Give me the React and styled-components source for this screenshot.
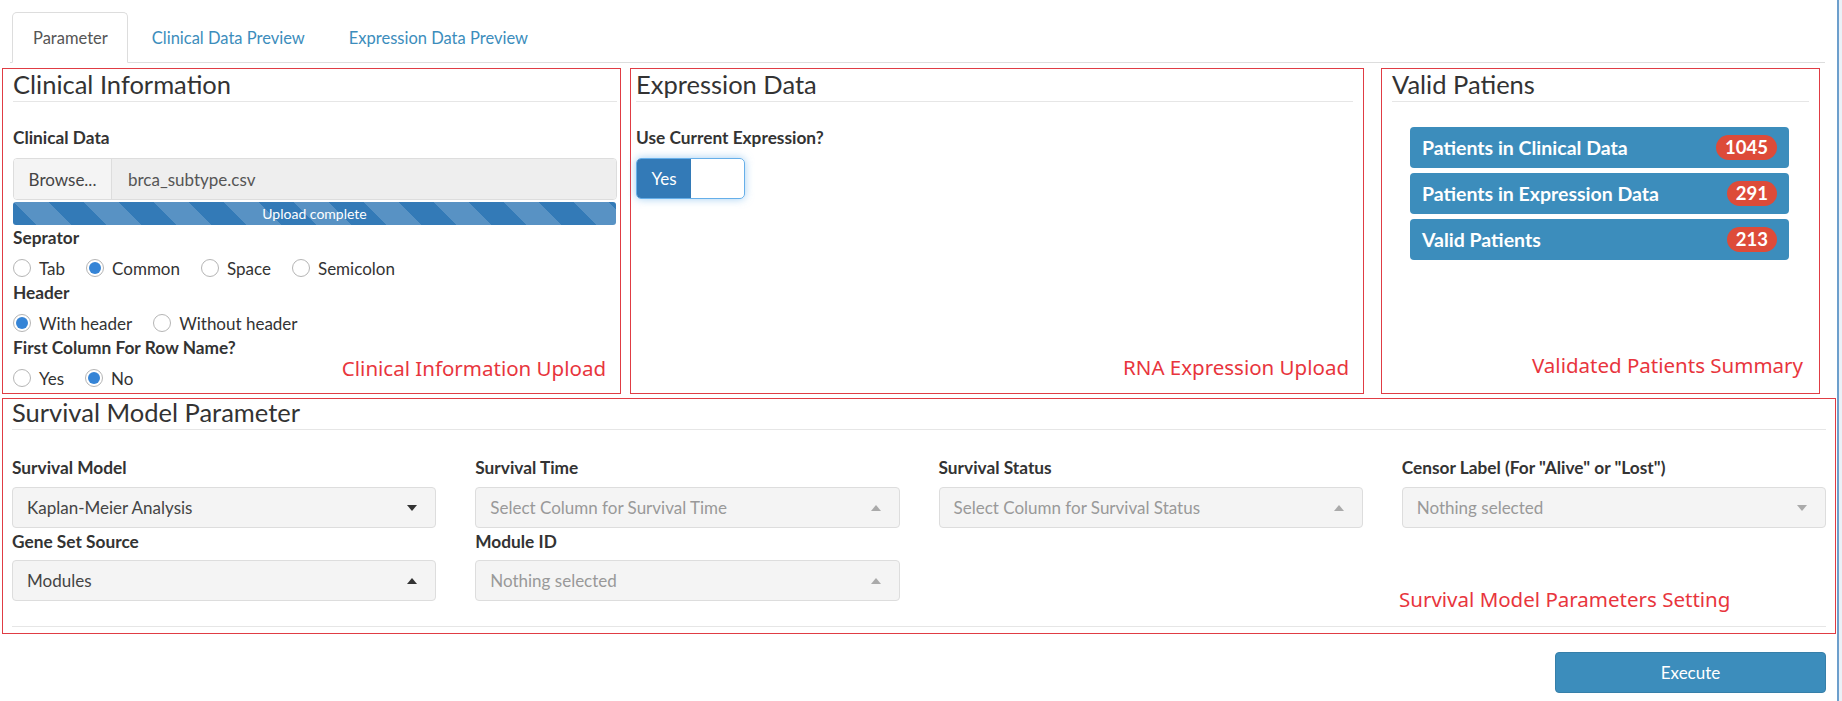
import React from 'react';
import styled, { createGlobalStyle, css } from 'styled-components';

const GlobalStyle = createGlobalStyle`
  html, body {
    margin: 0;
    padding: 0;
    background: #fff;
  }
  body {
    font-family: Lato, "Open Sans", sans-serif;
    color: #333;
  }
  * {
    box-sizing: border-box;
  }
`;

const Page = styled.div`
  display: flex;
  height: 701px;
  overflow: hidden;
`;

const Main = styled.div`
  flex: 1;
  padding-top: 12px;
`;

const RightRail = styled.div`
  width: 5px;
  border-left: 2px solid #6d9fcc;
  background: #eaf1f7;
`;

const TabBar = styled.ul`
  display: flex;
  list-style: none;
  margin: 0 12px 0 10px;
  padding: 0 0 0 2px;
  border-bottom: 1px solid #ddd;
`;

const Tab = styled.li`
  height: 51px;
  margin-bottom: -1px;
  margin-right: 3px;
  padding: 0 19px 0 20px;
  display: flex;
  align-items: center;
  font-size: 16.5px;
  color: #3c8dbc;
  border: 1px solid transparent;
  border-radius: 5px 5px 0 0;

  ${(p) =>
    p.$active &&
    css`
      color: #555;
      background: #fff;
      border-color: #ddd;
      border-bottom-color: #fff;
    `}
`;

const TopRow = styled.div`
  display: flex;
  margin-top: 5px;
  padding-left: 2px;
`;

const Box = styled.section`
  position: relative;
  width: ${(p) => p.$width}px;
  height: ${(p) => p.$height}px;
  margin-left: ${(p) => p.$offset || 0}px;
  padding: 0 ${(p) => p.$padRight ?? 10}px 0 ${(p) => p.$padLeft ?? 10}px;
  border: 1px solid #e03c44;
`;

const BoxTitle = styled.h3`
  margin: ${(p) => (p.$compact ? '-2px' : '0')} 0 0;
  font-size: 25.5px;
  font-weight: 400;
  line-height: 30px;
  color: #333;
`;

const Rule = styled.hr`
  margin: ${(p) => p.$top ?? 2}px 0 0;
  border: 0;
  border-top: 1px solid #e6e6e6;
`;

const Label = styled.div`
  margin-top: ${(p) => p.$top ?? 3}px;
  font-size: 17.3px;
  font-weight: 700;
  line-height: 22px;
  color: #333;
`;

const FileInput = styled.div`
  display: flex;
  height: 42px;
  margin-top: 9px;
  border: 1px solid #ddd;
  border-radius: 4px;
  overflow: hidden;
  font-size: 17px;
`;

const BrowseButton = styled.div`
  width: 98px;
  display: flex;
  align-items: center;
  justify-content: center;
  background: #f4f4f4;
  border-right: 1px solid #ddd;
  color: #444;
`;

const FileName = styled.div`
  flex: 1;
  display: flex;
  align-items: center;
  padding-left: 16px;
  background: #eee;
  color: #555;
`;

const Progress = styled.div`
  height: 23px;
  margin: 2px 1px 0 0;
  border-radius: 3px;
  background-color: #337ab7;
  background-image: linear-gradient(
    45deg,
    rgba(255, 255, 255, 0.18) 25%,
    transparent 25%,
    transparent 50%,
    rgba(255, 255, 255, 0.18) 50%,
    rgba(255, 255, 255, 0.18) 75%,
    transparent 75%,
    transparent
  );
  background-size: 70px 70px;
  display: flex;
  align-items: center;
  justify-content: center;
  font-size: 14px;
  color: #fff;
`;

const RadioRow = styled.div`
  display: flex;
  align-items: center;
  height: 22px;
  margin-top: 8px;
`;

const RadioOption = styled.label`
  display: flex;
  align-items: center;
  margin-right: 21px;
  font-size: 17px;
  color: #333;
`;

const RadioDot = styled.span`
  width: 18px;
  height: 18px;
  margin-right: 8px;
  border-radius: 50%;
  border: 1px solid #b5b5b5;
  background: #fff;
  display: flex;
  align-items: center;
  justify-content: center;

  &::after {
    content: '';
    width: 12px;
    height: 12px;
    border-radius: 50%;
    background: ${(p) => (p.$checked ? '#3584d6' : 'transparent')};
  }
`;

const Note = styled.div`
  position: absolute;
  right: ${(p) => p.$right ?? 14}px;
  bottom: ${(p) => p.$bottom ?? 14}px;
  font-family: "Noto Sans", sans-serif;
  font-size: 20.5px;
  line-height: 24px;
  color: #e8353d;
  white-space: nowrap;
`;

const CornerNote = styled(Note)`
  left: ${(p) => p.$left}px;
  right: auto;
`;

const Toggle = styled.div`
  display: flex;
  width: 109px;
  height: 41px;
  margin-top: 9px;
  border: 1px solid #66afe9;
  border-radius: 5px;
  overflow: hidden;
  box-shadow: 0 0 8px rgba(102, 175, 233, 0.6);
`;

const ToggleOn = styled.div`
  width: 54px;
  display: flex;
  align-items: center;
  justify-content: center;
  background: #337ab7;
  color: #fff;
  font-size: 17px;
`;

const ListGroup = styled.div`
  display: flex;
  flex-direction: column;
  gap: 5px;
  margin: 25px 20px 0 18px;
`;

const ListItem = styled.div`
  height: 41px;
  padding: 0 12px 0 12px;
  display: flex;
  align-items: center;
  justify-content: space-between;
  background: #3c8dbc;
  border-radius: 4px;
  color: #fff;
  font-size: 19.5px;
  font-weight: 700;
`;

const Badge = styled.span`
  height: 25px;
  padding: 0 9px;
  border-radius: 13px;
  background: #dd4b39;
  color: #fff;
  font-size: 18.5px;
  font-weight: 700;
  line-height: 25px;
`;

const BottomBox = styled(Box)`
  margin: 4px 0 0 2px;
`;

const FieldGrid = styled.div`
  display: grid;
  grid-template-columns: repeat(4, 1fr);
  column-gap: 39px;
  margin-top: 27px;
`;

const Field = styled.div`
  min-width: 0;
`;

const Select = styled.div`
  height: 41px;
  margin-top: ${(p) => p.$top ?? 8}px;
  padding: 0 18px 0 14px;
  display: flex;
  align-items: center;
  justify-content: space-between;
  background: #f4f4f4;
  border: 1px solid #ddd;
  border-radius: 4px;
  font-size: 17px;
  color: ${(p) => (p.$placeholder ? '#999' : '#444')};
`;

const Caret = styled.span`
  width: 0;
  height: 0;
  border-left: 5px solid transparent;
  border-right: 5px solid transparent;
  ${(p) =>
    p.$up
      ? css`
          border-bottom: 6px solid ${p.$muted ? '#aaa' : '#333'};
        `
      : css`
          border-top: 6px solid ${p.$muted ? '#aaa' : '#333'};
        `}
`;

const Footer = styled.div`
  display: flex;
  justify-content: flex-end;
  padding: 18px 11px 0 0;
`;

const ExecuteButton = styled.button`
  width: 271px;
  height: 41px;
  border: 1px solid #367fa9;
  border-radius: 4px;
  background: #3c8dbc;
  color: #fff;
  font-family: Lato, sans-serif;
  font-size: 17px;
`;

const Radio = ({ label, checked }) => (
  <RadioOption>
    <RadioDot $checked={checked} />
    {label}
  </RadioOption>
);

const SelectField = ({ value, placeholder, up, top }) => (
  <Select $placeholder={placeholder} $top={top}>
    {value}
    <Caret $up={up} $muted={placeholder} />
  </Select>
);

const patients = [
  { name: 'Patients in Clinical Data', count: 1045 },
  { name: 'Patients in Expression Data', count: 291 },
  { name: 'Valid Patients', count: 213 },
];

export default function App() {
  return (
    <Page>
      <GlobalStyle />
      <Main>
        <TabBar>
          <Tab $active>Parameter</Tab>
          <Tab>Clinical Data Preview</Tab>
          <Tab>Expression Data Preview</Tab>
        </TabBar>

        <TopRow>
          <Box $width={619} $height={326} $padRight={3}>
            <BoxTitle>Clinical Information</BoxTitle>
            <Rule />
            <Label $top={25}>Clinical Data</Label>
            <FileInput>
              <BrowseButton>Browse...</BrowseButton>
              <FileName>brca_subtype.csv</FileName>
            </FileInput>
            <Progress>Upload complete</Progress>
            <Label $top={2}>Seprator</Label>
            <RadioRow>
              <Radio label="Tab" />
              <Radio label="Common" checked />
              <Radio label="Space" />
              <Radio label="Semicolon" />
            </RadioRow>
            <Label>Header</Label>
            <RadioRow>
              <Radio label="With header" checked />
              <Radio label="Without header" />
            </RadioRow>
            <Label>First Column For Row Name?</Label>
            <RadioRow>
              <Radio label="Yes" />
              <Radio label="No" checked />
            </RadioRow>
            <Note $bottom={13}>Clinical Information Upload</Note>
          </Box>

          <Box $width={734} $height={326} $offset={9} $padLeft={5}>
            <BoxTitle>Expression Data</BoxTitle>
            <Rule />
            <Label $top={25}>Use Current Expression?</Label>
            <Toggle>
              <ToggleOn>Yes</ToggleOn>
            </Toggle>
            <Note>RNA Expression Upload</Note>
          </Box>

          <Box $width={439} $height={326} $offset={17}>
            <BoxTitle>Valid Patiens</BoxTitle>
            <Rule />
            <ListGroup>
              {patients.map((p) => (
                <ListItem key={p.name}>
                  {p.name}
                  <Badge>{p.count}</Badge>
                </ListItem>
              ))}
            </ListGroup>
            <Note $right={16} $bottom={16}>Validated Patients Summary</Note>
          </Box>
        </TopRow>

        <BottomBox $width={1834} $height={236} $padLeft={9} $padRight={9}>
          <BoxTitle $compact>Survival Model Parameter</BoxTitle>
          <Rule />
          <FieldGrid>
            <Field>
              <Label $top={0}>Survival Model</Label>
              <SelectField value="Kaplan-Meier Analysis" />
            </Field>
            <Field>
              <Label $top={0}>Survival Time</Label>
              <SelectField value="Select Column for Survival Time" placeholder up />
            </Field>
            <Field>
              <Label $top={0}>Survival Status</Label>
              <SelectField value="Select Column for Survival Status" placeholder up />
            </Field>
            <Field>
              <Label $top={0}>Censor Label (For "Alive" or "Lost")</Label>
              <SelectField value="Nothing selected" placeholder />
            </Field>
            <Field>
              <Label $top={3}>Gene Set Source</Label>
              <SelectField value="Modules" up top={7} />
            </Field>
            <Field>
              <Label $top={3}>Module ID</Label>
              <SelectField value="Nothing selected" placeholder up top={7} />
            </Field>
          </FieldGrid>
          <Rule $top={25} />
          <CornerNote $left={1396} $bottom={22}>
            Survival Model Parameters Setting
          </CornerNote>
        </BottomBox>

        <Footer>
          <ExecuteButton>Execute</ExecuteButton>
        </Footer>
      </Main>
      <RightRail />
    </Page>
  );
}
